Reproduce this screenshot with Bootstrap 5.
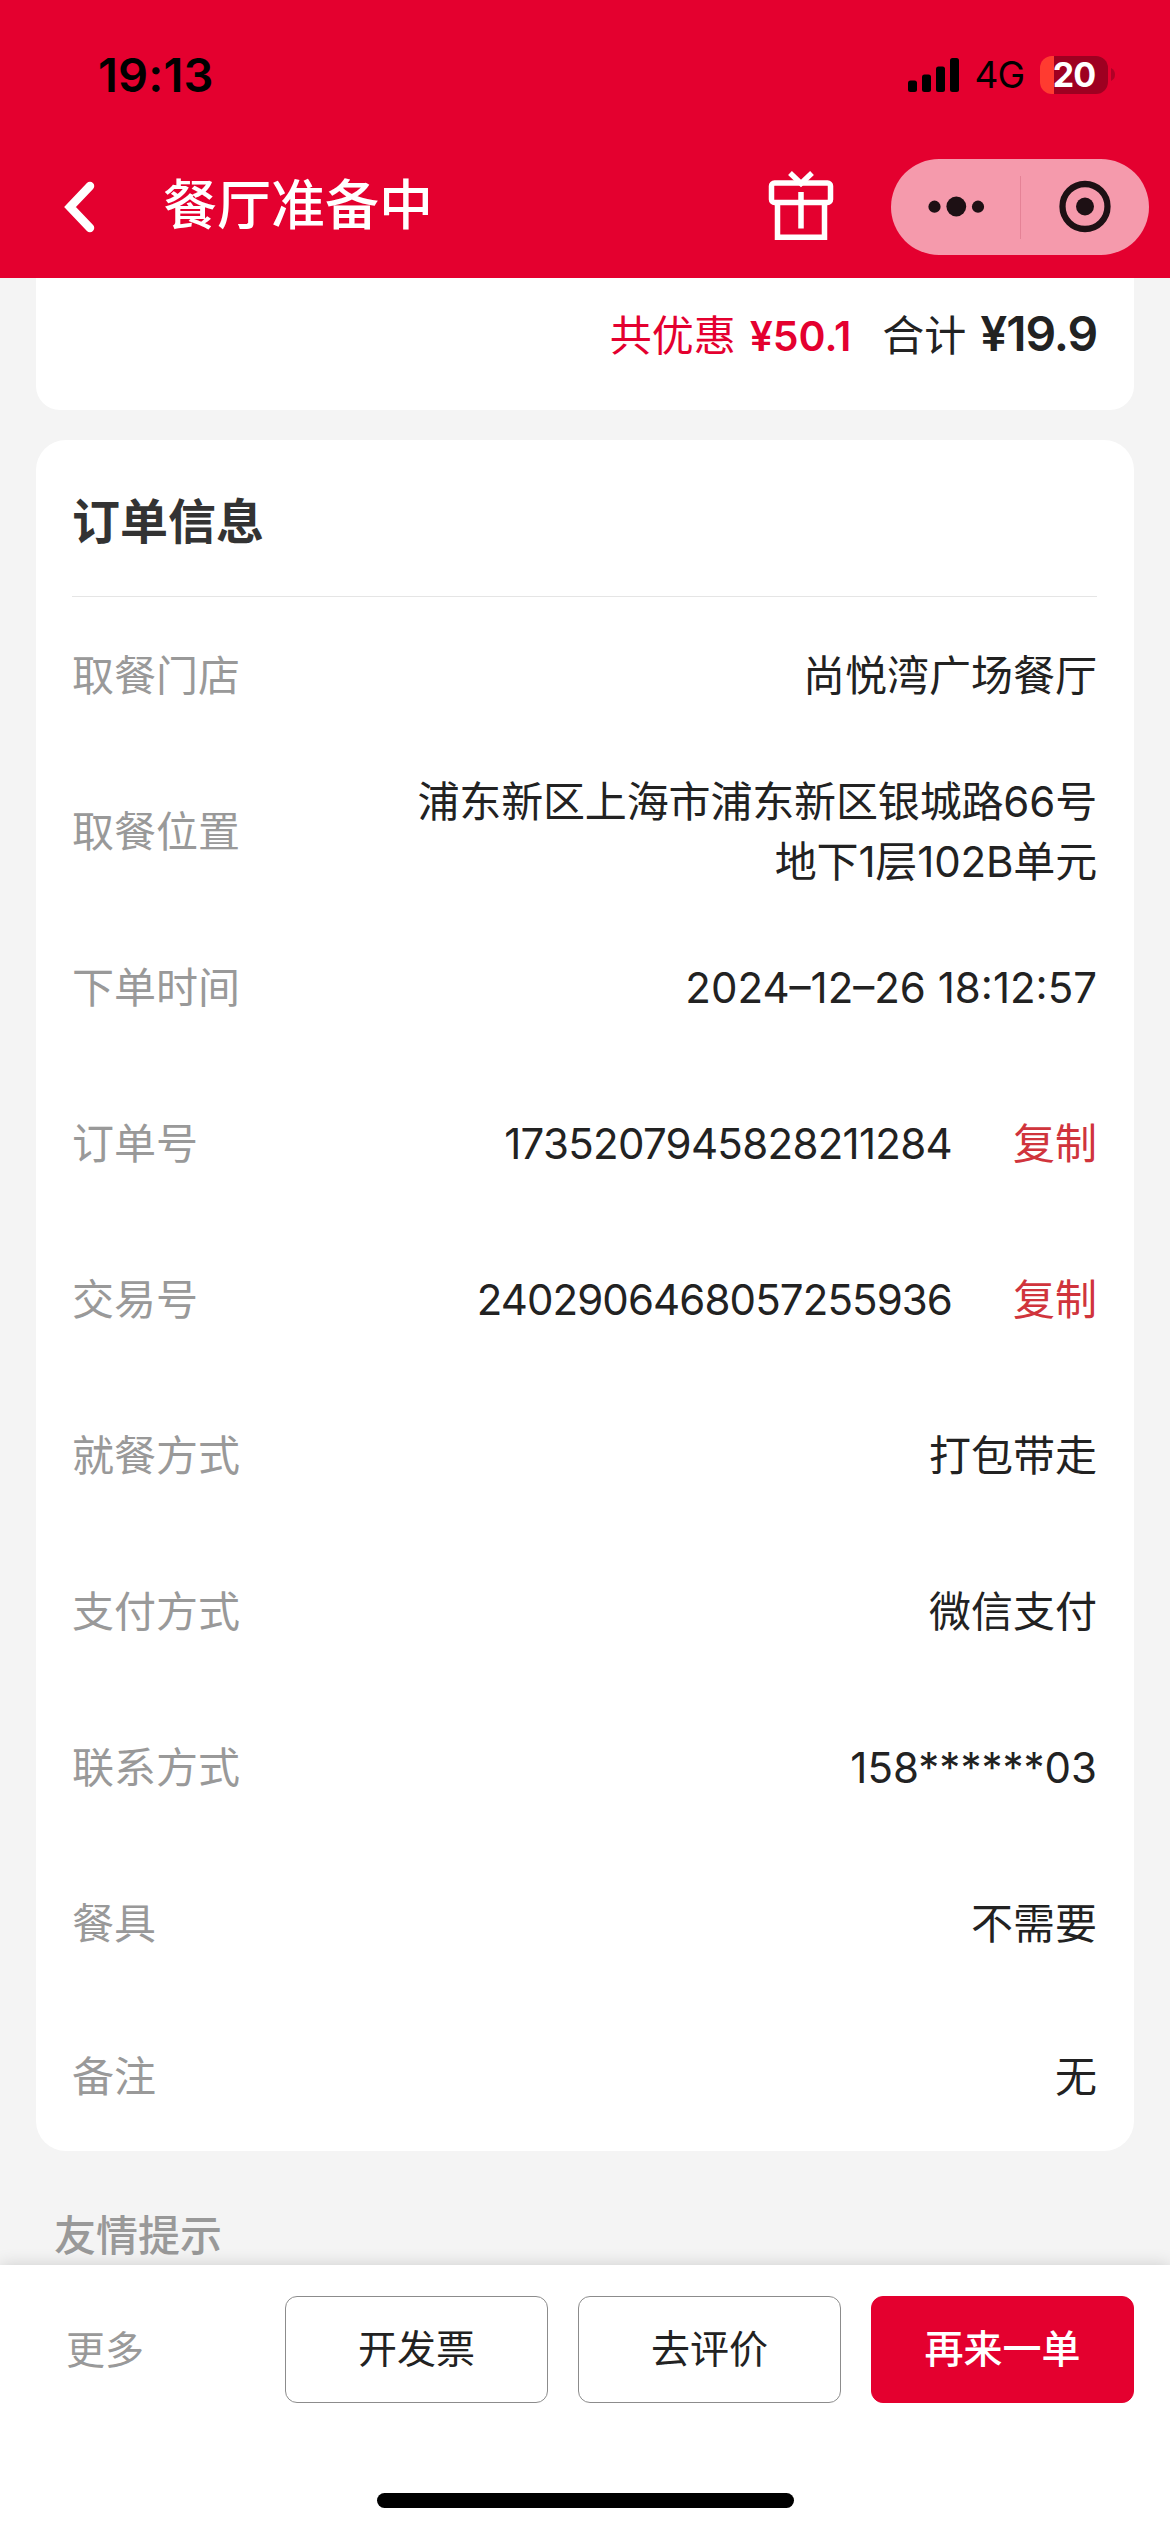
<!DOCTYPE html>
<html lang="zh-CN">
<head>
<meta charset="utf-8">
<meta name="viewport" content="width=device-width, initial-scale=1">
<title>餐厅准备中</title>
<link href="https://cdn.jsdelivr.net/npm/bootstrap@5.3.0/dist/css/bootstrap.min.css" rel="stylesheet">
<style>
  :root { --brand: #e4002f; --ink: #222; --muted: #999; }
  body { font-family: Inter, "Noto Sans CJK SC", sans-serif; font-size: 42px; line-height: 60px; color: var(--ink); background: #f4f4f4; height: 2532px; }
  svg { display: block; flex: none; }
  .topbar { background: var(--brand); height: 278px; }
  .status { height: 149px; padding: 0 55px 0 98px; }
  .clock { font-size: 47px; font-weight: 600; color: #000; letter-spacing: .2px; }
  .network { font-size: 37px; font-weight: 400; color: #000; letter-spacing: -1px; margin-left: 15px; padding-top: 1px; }
  .battery { width: 68px; height: 38px; margin-left: 16px; border-radius: 12px; background: linear-gradient(90deg, #ff3b30 14px, #9e0021 14px); color: #fff; font-size: 34px; font-weight: 700; line-height: 38px; letter-spacing: -1px; }
  .nub { margin-left: 3px; }
  .navrow { height: 116px; padding: 0 21px 0 64px; }
  .nav-title { font-size: 54px; font-weight: 500; color: #fff; line-height: 80px; margin-left: 67px; padding-bottom: 3px; }
  .gift { margin-right: 57px; }
  .capsule { width: 258px; height: 96px; background: #f59aac; }
  .panel { margin: 0 36px; padding: 0 37px 0 36px; background: #fff; }
  .sum-panel { height: 132px; border-radius: 0 0 24px 24px; padding-top: 26px; }
  .save { font-size: 41px; font-weight: 600; margin-left: 14px; }
  .sum-label { margin-left: 31px; }
  .total { font-size: 48px; font-weight: 600; margin-left: 14px; letter-spacing: -1.1px; }
  .order-panel { margin-top: 30px; height: 1711px; border-radius: 30px; }
  .order-title { height: 157px; padding-top: 8px; border-bottom: 1px solid #e5e5e5; font-size: 48px; font-weight: 600; color: #333; }
  .info-row { height: 156px; padding-top: 2px; }
  .info-row:last-child { height: 150px; }
  .muted { color: var(--muted); }
  .copy { color: #d0343c; margin-left: 61px; }
  .address { letter-spacing: -.15px; }
  .order-no { letter-spacing: -.7px; }
  .trade-no { letter-spacing: -.9px; }
  .brand { color: var(--brand); }
  .tip { height: 114px; padding: 55px 0 0 54px; font-weight: 500; }
  .actions { height: 267px; background: #fff; padding: 31px 36px 24px; box-shadow: 0 0 16px rgba(0,0,0,.16); font-size: 39px; position: relative; }
  .more { padding-left: 30px; }
  .act-group { gap: 30px; }
  .actions .btn { width: 263px; height: 107px; border: 1px solid #8c8c8c; border-radius: 12px; font-size: 39px; color: var(--ink); padding: 0; }
  .actions .btn-again { background: var(--brand); border-color: var(--brand); color: #fff; font-weight: 500; }
  .home-bar { width: 417px; height: 15px; background: #000; }
</style>
</head>
<body class="d-flex flex-column overflow-hidden">
<header class="topbar flex-shrink-0">
  <div class="status d-flex align-items-center justify-content-between">
    <span class="clock">19:13</span>
    <div class="d-flex align-items-center">
      <svg width="51" height="34" viewBox="0 0 51 34"><rect y="22.500" width="9" height="11.500" rx="2.500"/><rect x="14" y="16.500" width="9" height="17.500" rx="2.500"/><rect x="28" y="8.500" width="9" height="25.500" rx="2.500"/><rect x="42" width="9" height="34" rx="2.500"/></svg>
      <span class="network">4G</span>
      <span class="battery text-center">20</span>
      <svg class="nub" width="4" height="13" viewBox="0 0 4 13"><path d="M0 0Q4 2 4 6.500T0 13Z" fill="#b00026"/></svg>
    </div>
  </div>
  <div class="navrow d-flex align-items-center justify-content-between">
    <div class="d-flex align-items-center">
      <svg width="32" height="52" viewBox="0 0 32 52" fill="none" stroke="#fff" stroke-width="8.500" stroke-linecap="round"><path d="M26 5 6 26 26 47"/></svg>
      <span class="nav-title">餐厅准备中</span>
    </div>
    <div class="d-flex align-items-center">
      <svg class="gift" width="66" height="74" viewBox="0 0 66 74" fill="none" stroke="#fff" stroke-width="5.500"><rect x="3.500" y="13" width="59" height="19.500" rx="3"/><path d="M9.500 33V67.300H56.500V33M33 22V58.500M22 3 33 13.500 44 3"/></svg>
      <div class="capsule rounded-pill d-flex align-items-center">
        <svg width="258" height="96" viewBox="0 0 258 96" fill="#1d1014"><circle cx="43.500" cy="47.700" r="6.100"/><circle cx="65.300" cy="47.500" r="9.900"/><circle cx="87" cy="47.700" r="6.100"/><path d="M129.500 17V80" stroke="#e58296"/><circle cx="194" cy="47.500" r="9"/><circle cx="194" cy="47.500" r="22.500" fill="none" stroke="#1d1014" stroke-width="6.300"/></svg>
      </div>
    </div>
  </div>
</header>
<main class="flex-shrink-0">
  <section class="panel sum-panel d-flex justify-content-end align-items-baseline">
    <span class="brand">共优惠</span>
    <span class="brand save">¥50.1</span>
    <span class="sum-label">合计</span>
    <span class="total">¥19.9</span>
  </section>
  <section class="panel order-panel">
    <div class="order-title d-flex align-items-center">订单信息</div>
    <div class="info-row d-flex align-items-center justify-content-between"><span class="muted">取餐门店</span><span>尚悦湾广场餐厅</span></div>
    <div class="info-row d-flex align-items-center justify-content-between"><span class="muted">取餐位置</span><span class="text-end address">浦东新区上海市浦东新区银城路66号<br>地下1层102B单元</span></div>
    <div class="info-row d-flex align-items-center justify-content-between"><span class="muted">下单时间</span><span>2024–12–26 18:12:57</span></div>
    <div class="info-row d-flex align-items-center"><span class="muted me-auto">订单号</span><span class="order-no">1735207945828211284</span><span class="copy">复制</span></div>
    <div class="info-row d-flex align-items-center"><span class="muted me-auto">交易号</span><span class="trade-no">2402906468057255936</span><span class="copy">复制</span></div>
    <div class="info-row d-flex align-items-center justify-content-between"><span class="muted">就餐方式</span><span>打包带走</span></div>
    <div class="info-row d-flex align-items-center justify-content-between"><span class="muted">支付方式</span><span>微信支付</span></div>
    <div class="info-row d-flex align-items-center justify-content-between"><span class="muted">联系方式</span><span>158******03</span></div>
    <div class="info-row d-flex align-items-center justify-content-between"><span class="muted">餐具</span><span>不需要</span></div>
    <div class="info-row d-flex align-items-center justify-content-between"><span class="muted">备注</span><span>无</span></div>
  </section>
  <div class="tip muted">友情提示</div>
</main>
<footer class="actions flex-shrink-0 d-flex flex-column justify-content-between align-items-center">
  <div class="d-flex align-items-center w-100">
    <span class="muted me-auto more">更多</span>
    <div class="d-flex act-group">
      <button class="btn" type="button">开发票</button>
      <button class="btn" type="button">去评价</button>
      <button class="btn btn-again" type="button">再来一单</button>
    </div>
  </div>
  <div class="home-bar rounded-pill"></div>
</footer>
<script src="https://cdn.jsdelivr.net/npm/bootstrap@5.3.0/dist/js/bootstrap.bundle.min.js"></script>
</body>
</html>
